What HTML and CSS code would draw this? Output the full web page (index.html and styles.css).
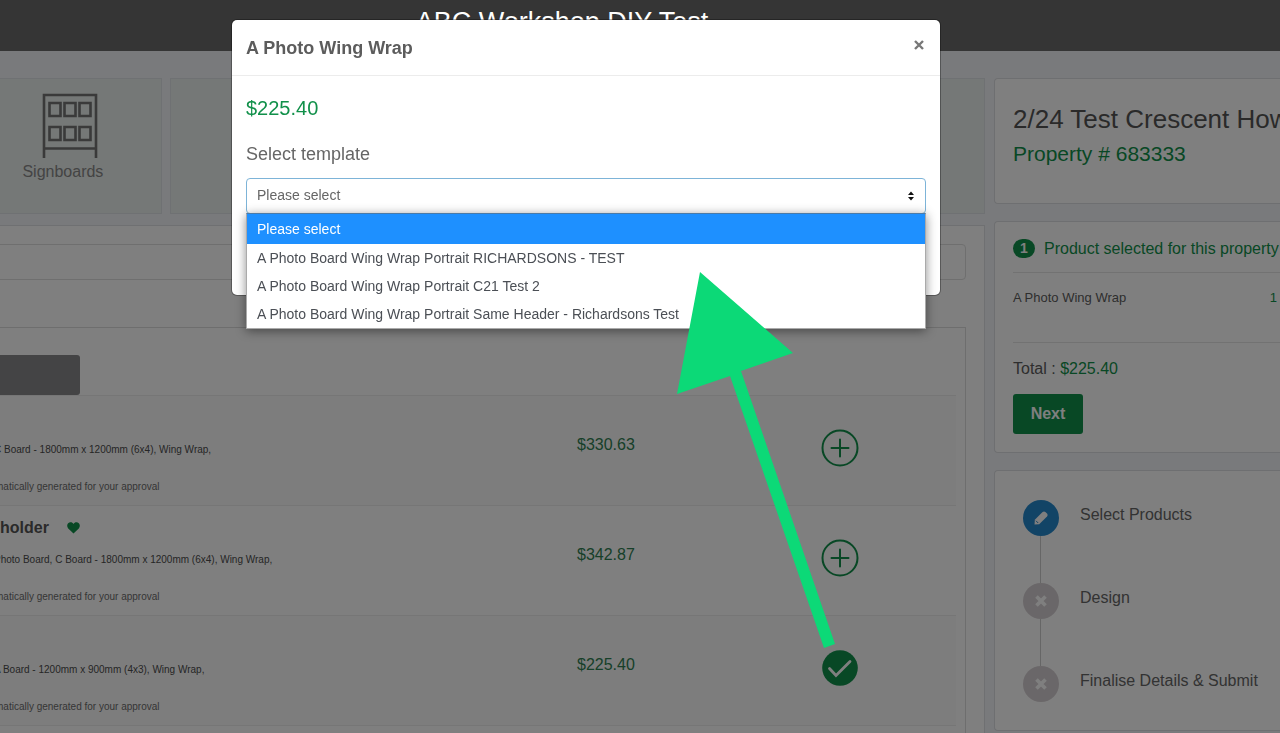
FILE: index.html
```html
<!DOCTYPE html>
<html lang="en">
<head>
<meta charset="utf-8">
<title>ABC Workshop DIY Test</title>
<link rel="stylesheet" href="styles.css">
</head>
<body>
<header class="topbar"><h1 class="topbar-title">ABC Workshop DIY Test</h1></header>

<div class="page">
  <main class="main">
    <nav class="tiles" aria-label="Categories">
      <a class="tile" href="#signboards">
        <svg class="tile-icon" width="56" height="66" viewBox="0 0 56 66" fill="none" stroke="currentColor" stroke-width="2.6">
          <path d="M2 65V2H54V65M2 55.500H54"/>
          <path d="M7.500 10H18.500V23H7.500ZM22.500 10H33.500V23H22.500ZM37.500 10H48.500V23H37.500ZM7.500 34H18.500V47H7.500ZM22.500 34H33.500V47H22.500ZM37.500 34H48.500V47H37.500Z"/>
        </svg>
        <span>Signboards</span>
      </a>
      <div class="tile"></div>
      <div class="tile"></div>
      <div class="tile"></div>
      <div class="tile"></div>
    </nav>

    <section class="panel">
      <div class="search"><input class="search-input" type="text" aria-label="Search products"></div>
      <div class="list">
        <button class="filter" type="button" aria-label="Filter"></button>
        <table class="products">
          <tbody>
            <tr>
              <td class="desc"><div class="name"></div><p class="spec">C Board - 1800mm x 1200mm (6x4), Wing Wrap,</p><p class="note">matically generated for your approval</p></td>
              <td class="price">$330.63</td>
              <td class="action"><button class="round" type="button" aria-label="Add"><svg width="38" height="38" viewBox="0 0 38 38" fill="none" stroke="currentColor" stroke-width="2" stroke-linecap="round"><circle cx="19" cy="19" r="17.500"/><path d="M19 10.500V27.500M10.500 19H27.500"/></svg></button></td>
            </tr>
            <tr>
              <td class="desc"><div class="name">holder <svg class="heart" width="13" height="12" viewBox="0 0 13 12" fill="currentColor"><path d="M6.500 11.500L1.200 6.400C-.6 4.500.1 1.300 2.400.6 4-.1 5.700.6 6.500 2 7.300.6 9-.1 10.600.6 12.900 1.300 13.600 4.500 11.800 6.400Z"/></svg></div><p class="spec">Photo Board, C Board - 1800mm x 1200mm (6x4), Wing Wrap,</p><p class="note">matically generated for your approval</p></td>
              <td class="price">$342.87</td>
              <td class="action"><button class="round" type="button" aria-label="Add"><svg width="38" height="38" viewBox="0 0 38 38" fill="none" stroke="currentColor" stroke-width="2" stroke-linecap="round"><circle cx="19" cy="19" r="17.500"/><path d="M19 10.500V27.500M10.500 19H27.500"/></svg></button></td>
            </tr>
            <tr>
              <td class="desc"><div class="name"></div><p class="spec">A Board - 1200mm x 900mm (4x3), Wing Wrap,</p><p class="note">matically generated for your approval</p></td>
              <td class="price">$225.40</td>
              <td class="action"><button class="round" type="button" aria-label="Selected"><svg width="38" height="38" viewBox="0 0 38 38" fill="none"><circle cx="19" cy="19" r="17.800" fill="currentColor"/><path d="M8.500 19.500L15 26.500L29 12.500" stroke="#fff" stroke-width="2.800" stroke-linecap="round"/></svg></button></td>
            </tr>
          </tbody>
        </table>
      </div>
    </section>
  </main>

  <aside class="side">
    <section class="card property">
      <h2 class="address">2/24 Test Crescent Howard</h2>
      <p class="property-id">Property # 683333</p>
    </section>
    <section class="card order">
      <h3 class="order-title"><span class="count">1</span>Product selected for this property</h3>
      <div class="order-line"><span>A Photo Wing Wrap</span><span class="qty">1</span></div>
      <p class="total">Total : <span class="green">$225.40</span></p>
      <button class="next" type="button">Next</button>
    </section>
    <section class="card">
      <ol class="steps">
        <li class="step"><span class="dot dot-active"><svg width="14" height="14" viewBox="0 0 14 14" fill="#fff"><path d="M.5 13.500L.8 8.800L8.600 1Q10 -.2 11.400 1L13 2.600Q14.200 4 13 5.400L5.200 13.200Z"/><path d="M2 9.800L4.200 12" stroke="#2588cc"/></svg></span><span>Select Products</span></li>
        <li class="step"><span class="dot"><svg width="12" height="12" viewBox="0 0 12 12" stroke="#fff" stroke-width="3.600"><path d="M1.500 1.500L10.500 10.500M10.500 1.500L1.500 10.500"/></svg></span><span>Design</span></li>
        <li class="step"><span class="dot"><svg width="12" height="12" viewBox="0 0 12 12" stroke="#fff" stroke-width="3.600"><path d="M1.500 1.500L10.500 10.500M10.500 1.500L1.500 10.500"/></svg></span><span>Finalise Details &amp; Submit</span></li>
      </ol>
    </section>
  </aside>
</div>

<div class="backdrop"></div>

<div class="modal-layer">
  <div class="modal" role="dialog" aria-modal="true" aria-labelledby="modal-title">
    <div class="modal-head">
      <h2 class="modal-title" id="modal-title">A Photo Wing Wrap</h2>
      <button class="close" type="button" aria-label="Close"><svg width="10" height="10" viewBox="0 0 10 10" stroke="currentColor" stroke-width="2.400"><path d="M1 1L9 9M9 1L1 9"/></svg></button>
    </div>
    <div class="modal-body">
      <p class="modal-price">$225.40</p>
      <label class="modal-label" for="template">Select template</label>
      <div class="picker">
        <select class="select" id="template"><option>Please select</option></select>
        <svg class="carets" width="8" height="10" viewBox="0 0 8 10" fill="#111"><path d="M4 .5L7 4H1ZM4 9.500L1 6H7Z"/></svg>
        <ul class="menu" role="listbox" aria-label="Templates">
          <li class="option option-active" role="option" aria-selected="true">Please select</li>
          <li class="option" role="option">A Photo Board Wing Wrap Portrait RICHARDSONS - TEST</li>
          <li class="option" role="option">A Photo Board Wing Wrap Portrait C21 Test 2</li>
          <li class="option" role="option">A Photo Board Wing Wrap Portrait Same Header - Richardsons Test</li>
        </ul>
      </div>
    </div>
  </div>
</div>

<svg class="pointer" width="120" height="380" viewBox="0 0 120 380" fill="#0cd977" aria-hidden="true"><path d="M25 0L118 81L66 99L160 372L149 376L55 104L2 122Z"/></svg>
</body>
</html>
```
FILE: styles.css
```css
* { box-sizing: border-box; }
body {
  margin: 0;
  height: 100vh;
  overflow: hidden;
  background: #f3f5f9;
  color: #5c5c5c;
  font-family: "Liberation Sans", Arial, sans-serif;
  font-size: 16px;
}
h1, h2, h3, p, ul, ol { margin: 0; padding: 0; font-weight: normal; }
ul, ol { list-style: none; }
button { font-family: inherit; cursor: pointer; }
.green { color: #11904a; }

.topbar {
  position: relative;
  z-index: 2;
  padding: 7px 156px 14px 0;
  background: #353535;
  color: #fff;
  text-align: center;
}
.topbar-title { font-size: 27px; line-height: 30px; }

.page {
  display: grid;
  grid-template-columns: minmax(0, 1fr) 286px;
  gap: 9px;
  padding-top: 27px;
}

/* The main column runs past the left edge of the window */
.main { margin-left: -36px; }
.tiles { display: grid; grid-template-columns: repeat(5, 1fr); gap: 8px; }
.tile {
  display: flex;
  flex-direction: column;
  align-items: center;
  gap: 3px;
  height: 136px;
  padding-top: 14px;
  background: #ebf0ee;
  border: 1px solid #dfe3e6;
  color: #888;
  line-height: 20px;
  text-decoration: none;
}
.tile-icon { color: #747474; margin-left: 14px; }

.panel {
  margin-top: 11px;
  padding: 18px 18px 0 35px;
  background: #fff;
  border: 1px solid #dfe1e4;
}
.search { margin-left: -17px; padding-bottom: 47px; }
.search-input {
  display: block;
  width: 100%;
  height: 36px;
  border: 1px solid #dedede;
  border-radius: 4px;
  background: #fff;
}
.list { padding: 27px 9px 40px 0; border: 1px solid #dcdcdc; border-left: 0; }
.filter {
  display: block;
  width: 80px;
  height: 40px;
  border: 0;
  border-radius: 0 3px 3px 0;
  background: #88888b;
}
.products { width: 100%; border-collapse: collapse; table-layout: fixed; }
.products tr { height: 110px; border-top: 1px solid #ececec; border-bottom: 1px solid #ececec; }
.products tr:nth-child(odd) { background: #fbfbfb; }
.products td { padding: 0; vertical-align: top; }
.desc { width: 577px; color: #4c4c4c; font-size: 10px; line-height: 14px; }
.name { height: 47px; padding-top: 11px; font-size: 16px; line-height: 22px; font-weight: bold; color: #555; }
.heart { margin-left: 14px; color: #11904a; vertical-align: -1px; }
.spec { text-indent: -6px; }
.note { margin-top: 23px; text-indent: -5px; color: #6c6c6c; }
.products .price { padding-top: 39px; line-height: 20px; color: #2f8052; }
.action { width: 135px; }
.round { display: block; margin-top: 33px; padding: 0; border: 0; background: none; color: #11904a; line-height: 0; }

.side { display: flex; flex-direction: column; gap: 17px; white-space: nowrap; }
.card {
  padding: 17px 0 18px 18px;
  background: #fff;
  border: 1px solid #dcdee2;
  border-right: 0;
  border-radius: 4px 0 0 4px;
}
.property { height: 126px; padding-top: 23px; overflow: hidden; }
.address { font-size: 26px; line-height: 34px; color: #555; }
.property-id { font-size: 21px; line-height: 36px; color: #11904a; }
.order-title { display: flex; align-items: center; gap: 9px; padding-bottom: 14px; font-size: 16px; line-height: 19px; color: #11904a; }
.count {
  width: 22px;
  border-radius: 10px;
  background: #11904a;
  color: #fff;
  font-weight: bold;
  font-size: 14px;
  text-align: center;
}
.order-line {
  display: flex;
  justify-content: space-between;
  height: 71px;
  padding: 16px 3px 0 0;
  border-top: 1px solid #e4e4e4;
  border-bottom: 1px solid #e4e4e4;
  font-size: 13px;
  line-height: 18px;
}
.qty { color: #11904a; }
.total { padding: 16px 0 15px; line-height: 20px; }
.next {
  display: block;
  width: 70px;
  height: 40px;
  border: 0;
  border-radius: 3px;
  background: #11904a;
  color: #fff;
  font-size: 16px;
  font-weight: bold;
}
.steps { padding: 12px 0 10px 10px; }
.step { position: relative; display: flex; gap: 21px; padding-bottom: 47px; line-height: 30px; color: #666; }
.step:last-child { padding-bottom: 0; }
.step:not(:last-child)::before {
  content: "";
  position: absolute;
  left: 17px;
  top: 36px;
  bottom: 0;
  width: 1px;
  background: #ccc;
}
.dot {
  display: flex;
  align-items: center;
  justify-content: center;
  width: 36px;
  height: 36px;
  border-radius: 50%;
  background: #d5cfd2;
}
.dot-active { background: #2588cc; }

.backdrop { position: fixed; inset: 0; z-index: 1; background: rgba(0, 0, 0, 0.5); }
.modal-layer { position: fixed; inset: 0; z-index: 3; padding: 20px 340px 0 232px; }
.modal { border-radius: 5px; background: #fff; box-shadow: 0 0 0 1px rgba(0, 0, 0, 0.3); }
.modal-head {
  display: flex;
  justify-content: space-between;
  align-items: flex-start;
  padding: 16px 14px 15px;
  border-bottom: 1px solid #ececec;
}
.modal-title { font-size: 18px; line-height: 24px; font-weight: bold; }
.close { padding: 4px 2px; border: 0; background: none; color: #777; line-height: 0; }
.modal-body { padding: 18px 14px 81px; }
.modal-price { font-size: 20px; line-height: 28px; color: #11904a; }
.modal-label { display: block; padding: 20px 0 12px; font-size: 18px; line-height: 24px; color: #666; }
.picker { position: relative; }
.select {
  display: block;
  width: 100%;
  height: 36px;
  padding: 0 10px 2px;
  appearance: none;
  border: 1px solid #7db4d8;
  border-radius: 4px;
  background: #fff;
  color: #666;
  font-family: inherit;
  font-size: 14px;
}
.carets { position: absolute; right: 11px; top: 13px; }
.menu {
  position: absolute;
  top: 35px;
  left: 0;
  right: 0;
  border: 1px solid #aaa;
  border-top-color: #4c7ba8;
  background: #fff;
  box-shadow: 0 2px 10px rgba(0, 0, 0, 0.45);
  color: #4b4f55;
}
.option { padding: 0 10px; font-size: 14px; line-height: 28px; }
.option-active { background: #1e90ff; color: #fff; line-height: 30px; }

.pointer { position: fixed; left: 675px; top: 272px; z-index: 4; overflow: visible; }
```
